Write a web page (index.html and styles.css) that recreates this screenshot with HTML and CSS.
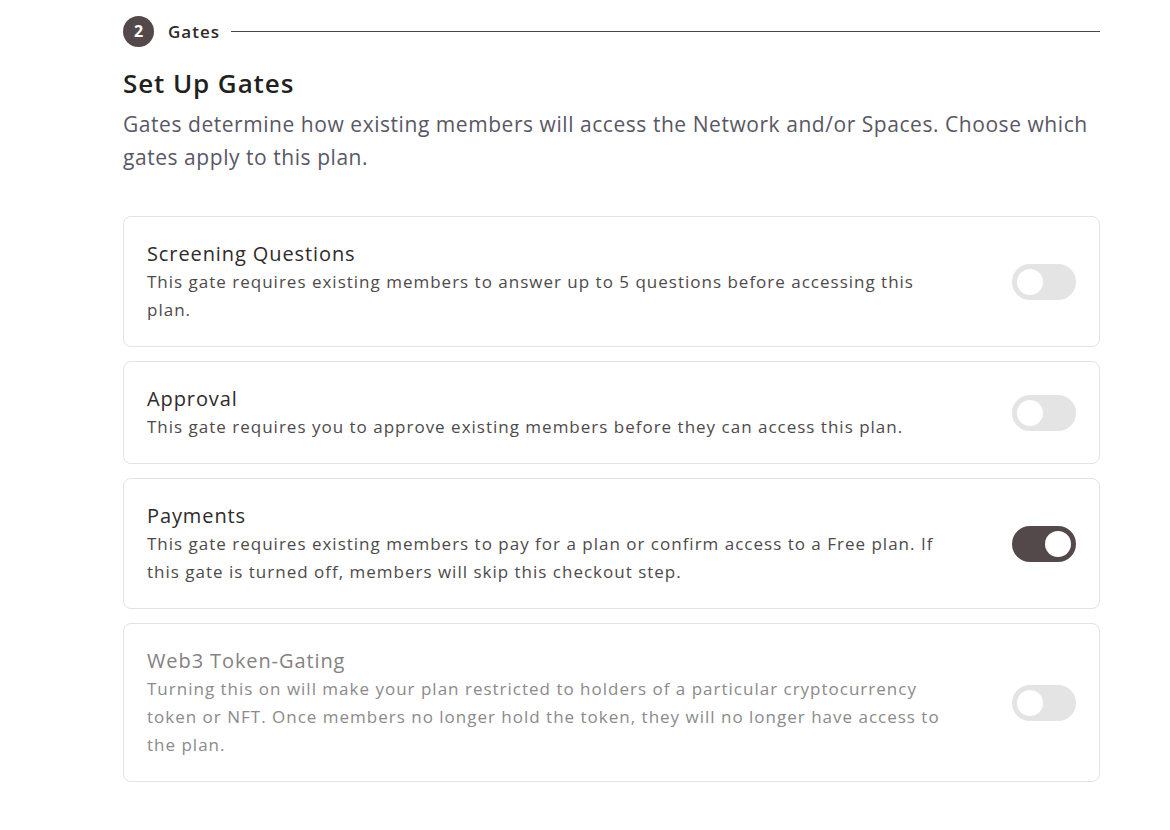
FILE: index.html
```html
<!DOCTYPE html>
<html lang="en">
<head>
<meta charset="utf-8">
<title>Set Up Gates</title>
<link rel="stylesheet" href="styles.css">
</head>
<body>
<main class="page">
  <div class="step">
    <span class="step-num">2</span>
    <span class="step-label">Gates</span>
    <span class="step-line"></span>
  </div>
  <h1 class="title">Set Up Gates</h1>
  <p class="intro">Gates determine how existing members will access the Network and/or Spaces. Choose which gates apply to this plan.</p>

  <div class="cards">
    <section class="card">
      <div class="card-text">
        <h2 class="card-title">Screening Questions</h2>
        <p class="card-desc">This gate requires existing members to answer up to 5 questions before accessing this plan.</p>
      </div>
      <span class="toggle"><span class="knob"></span></span>
    </section>
    <section class="card">
      <div class="card-text">
        <h2 class="card-title">Approval</h2>
        <p class="card-desc">This gate requires you to approve existing members before they can access this plan.</p>
      </div>
      <span class="toggle"><span class="knob"></span></span>
    </section>
    <section class="card">
      <div class="card-text">
        <h2 class="card-title">Payments</h2>
        <p class="card-desc">This gate requires existing members to pay for a plan or confirm access to a Free plan. If this gate is turned off, members will skip this checkout step.</p>
      </div>
      <span class="toggle on"><span class="knob"></span></span>
    </section>
    <section class="card disabled">
      <div class="card-text">
        <h2 class="card-title">Web3 Token-Gating</h2>
        <p class="card-desc">Turning this on will make your plan restricted to holders of a particular cryptocurrency token or NFT. Once members no longer hold the token, they will no longer have access to the plan.</p>
      </div>
      <span class="toggle"><span class="knob"></span></span>
    </section>
  </div>
</main>
</body>
</html>
```

FILE: styles.css
```css
* { box-sizing: border-box; }
html, body { margin: 0; padding: 0; background: #ffffff; }
body {
  font-family: "Open Sans", "Noto Sans", sans-serif;
  color: #2f2a2b;
}
.page {
  width: 977px;
  margin-left: 123px;
  padding-top: 16px;
}
.step {
  display: flex;
  align-items: center;
  height: 30px;
}
.step-num {
  width: 31px;
  height: 31px;
  border-radius: 50%;
  background: #54494a;
  color: #fff;
  font-size: 16px;
  font-weight: 700;
  display: flex;
  align-items: center;
  justify-content: center;
}
.step-label {
  margin-left: 14px;
  font-size: 17px;
  font-weight: 600;
  letter-spacing: 1px;
  color: #2f2a2b;
}
.step-line {
  flex: 1;
  height: 1px;
  background: #4a4445;
  margin-left: 11px;
}
.title {
  margin: 21px 0 0;
  font-size: 26px;
  font-weight: 600;
  line-height: 32px;
  letter-spacing: 0.9px;
  color: #231f20;
}
.intro {
  margin: 9px 0 0;
  font-size: 21px;
  line-height: 33px;
  letter-spacing: 0.55px;
  color: #595765;
  font-weight: 400;
}
.cards {
  margin-top: 42px;
  display: flex;
  flex-direction: column;
  gap: 14px;
}
.card {
  border: 1px solid #e3e3e3;
  border-radius: 8px;
  padding: 23px 23px 22px 23px;
  display: flex;
  align-items: center;
  gap: 64px;
}
.card-text { flex: 1; }
.card-title {
  margin: 0;
  font-size: 20px;
  font-weight: 400;
  line-height: 28px;
  letter-spacing: 0.9px;
  color: #2f2a2b;
}
.card-desc {
  margin: 0;
  font-size: 17px;
  line-height: 28px;
  letter-spacing: 1px;
  color: #4e4a4b;
}
.card.disabled .card-title { color: #848282; }
.card.disabled .card-desc { color: #8c8a8a; }
.toggle {
  flex: none;
  width: 64px;
  height: 36px;
  border-radius: 18px;
  background: #e4e4e4;
  display: flex;
  align-items: center;
  padding: 0 5px;
}
.knob {
  width: 26px;
  height: 26px;
  border-radius: 50%;
  background: #fff;
}
.toggle.on {
  background: #54494a;
  justify-content: flex-end;
}
```
